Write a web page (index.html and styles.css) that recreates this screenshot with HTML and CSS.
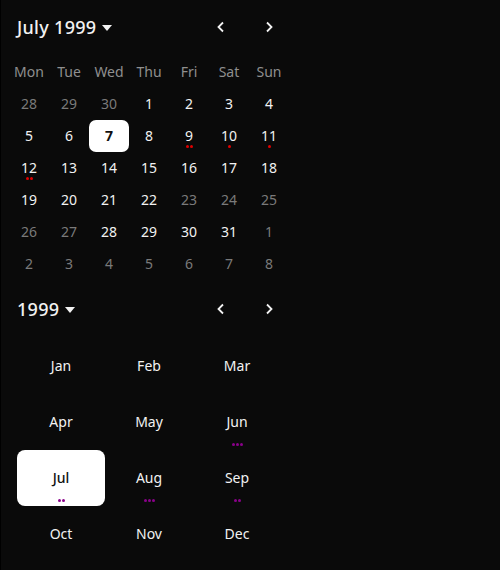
FILE: index.html
```html
<!DOCTYPE html>
<html lang="en">
<head>
    <meta charset="UTF-8">
    <meta name="viewport" content="width=device-width, initial-scale=1.0">
    <title>Calendar</title>
    <link rel="stylesheet" href="styles.css">
</head>
<body>
    <div class="picker">
        <div class="head">
            <button class="title">July 1999 <span class="caret"></span></button>
            <div class="nav">
                <button class="arrow"><svg width="10" height="12" viewBox="0 0 10 12"><path d="M7 1.5 L2.5 6 L7 10.5" fill="none" stroke="#f2f2f2" stroke-width="1.8"/></svg></button>
                <button class="arrow"><svg width="10" height="12" viewBox="0 0 10 12"><path d="M3 1.5 L7.5 6 L3 10.5" fill="none" stroke="#f2f2f2" stroke-width="1.8"/></svg></button>
            </div>
        </div>
        <div class="days">
            <span class="wd">Mon</span><span class="wd">Tue</span><span class="wd">Wed</span><span class="wd">Thu</span><span class="wd">Fri</span><span class="wd">Sat</span><span class="wd">Sun</span>

            <span class="day out">28</span><span class="day out">29</span><span class="day out">30</span><span class="day">1</span><span class="day">2</span><span class="day">3</span><span class="day">4</span>
            <span class="day">5</span><span class="day">6</span><span class="day sel">7</span><span class="day">8</span>
            <span class="day">9<i class="dots red"><b></b><b></b></i></span>
            <span class="day">10<i class="dots red"><b></b></i></span>
            <span class="day">11<i class="dots red"><b></b></i></span>
            <span class="day">12<i class="dots red"><b></b><b></b></i></span><span class="day">13</span><span class="day">14</span><span class="day">15</span><span class="day">16</span><span class="day">17</span><span class="day">18</span>
            <span class="day">19</span><span class="day">20</span><span class="day">21</span><span class="day">22</span><span class="day out">23</span><span class="day out">24</span><span class="day out">25</span>
            <span class="day out">26</span><span class="day out">27</span><span class="day">28</span><span class="day">29</span><span class="day">30</span><span class="day">31</span><span class="day out">1</span>
            <span class="day out">2</span><span class="day out">3</span><span class="day out">4</span><span class="day out">5</span><span class="day out">6</span><span class="day out">7</span><span class="day out">8</span>
        </div>

        <div class="head second">
            <button class="title">1999 <span class="caret"></span></button>
            <div class="nav">
                <button class="arrow"><svg width="10" height="12" viewBox="0 0 10 12"><path d="M7 1.5 L2.5 6 L7 10.5" fill="none" stroke="#f2f2f2" stroke-width="1.8"/></svg></button>
                <button class="arrow"><svg width="10" height="12" viewBox="0 0 10 12"><path d="M3 1.5 L7.5 6 L3 10.5" fill="none" stroke="#f2f2f2" stroke-width="1.8"/></svg></button>
            </div>
        </div>
        <div class="months">
            <span class="month">Jan</span>
            <span class="month">Feb</span>
            <span class="month">Mar</span>
            <span class="month">Apr</span>
            <span class="month">May</span>
            <span class="month">Jun<i class="dots purple"><b></b><b></b><b></b></i></span>
            <span class="month sel">Jul<i class="dots purple"><b></b><b></b></i></span>
            <span class="month">Aug<i class="dots purple"><b></b><b></b><b></b></i></span>
            <span class="month">Sep<i class="dots purple"><b></b><b></b></i></span>
            <span class="month">Oct</span>
            <span class="month">Nov</span>
            <span class="month">Dec</span>
        </div>
    </div>
</body>
</html>
```

FILE: styles.css
```css
* {
    margin: 0;
    padding: 0;
    box-sizing: border-box;
}
body {
    background-color: #0a0a0a;
    border-left: 1px solid #000;
    min-height: 570px;
    font-family: "Noto Sans", "Open Sans", sans-serif;
    color: #f2f2f2;
}
.picker {
    width: 280px;
    margin-left: 8px;
}
.head {
    display: flex;
    align-items: center;
    justify-content: space-between;
    height: 56px;
    padding: 0 8px 2px 8px;
}
.second {
    margin-top: 2px;
}
button {
    background: none;
    border: none;
    color: inherit;
    font-family: inherit;
}
.title {
    display: flex;
    align-items: center;
    gap: 6px;
    font-size: 18px;
    font-weight: 500;
    letter-spacing: 0.3px;
}
.caret {
    width: 0;
    height: 0;
    border-left: 5px solid transparent;
    border-right: 5px solid transparent;
    border-top: 6px solid #f2f2f2;
    margin-top: 2px;
}
.nav {
    display: flex;
    gap: 24px;
}
.arrow {
    width: 24px;
    height: 24px;
    display: flex;
    align-items: center;
    justify-content: center;
}
.days {
    display: grid;
    grid-template-columns: repeat(7, 40px);
    grid-auto-rows: 32px;
}
.wd {
    display: flex;
    align-items: center;
    justify-content: center;
    padding-bottom: 2px;
    font-size: 14px;
    color: #8f8f8f;
}
.day {
    position: relative;
    display: flex;
    align-items: center;
    justify-content: center;
    padding-bottom: 2px;
    font-size: 14px;
    color: #f2f2f2;
}
.day.out {
    color: #7a7a7a;
}
.day.sel {
    background-color: #fff;
    color: #111;
    font-weight: 700;
    border-radius: 7px;
}
.dots {
    position: absolute;
    left: 0;
    right: 0;
    display: flex;
    justify-content: center;
    gap: 1px;
}
.day .dots {
    top: 25px;
}
.dots b {
    width: 3px;
    height: 3px;
    border-radius: 50%;
}
.red b {
    background-color: #e00000;
}
.purple b {
    background-color: #8a008a;
}
.months {
    display: grid;
    grid-template-columns: repeat(3, 88px);
    grid-auto-rows: 56px;
    margin-left: 8px;
}
.month {
    position: relative;
    display: flex;
    align-items: center;
    justify-content: center;
    padding-bottom: 2px;
    font-size: 14px;
    color: #f2f2f2;
}
.month .dots {
    top: 49px;
}
.month.sel {
    background-color: #fff;
    color: #111;
    font-weight: 500;
    border-radius: 8px;
}
```
